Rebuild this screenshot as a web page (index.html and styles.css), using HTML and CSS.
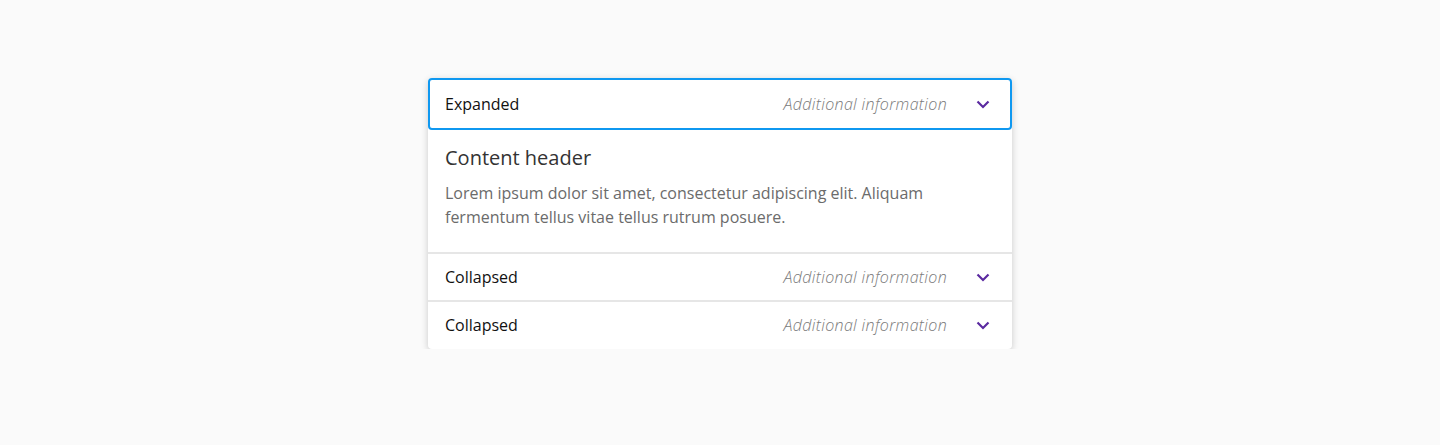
FILE: index.html
```html
<!DOCTYPE html>
<html>
<head>
<meta charset="utf-8">
<link rel="stylesheet" href="styles.css">
</head>
<body>
<div class="accordion">
  <div class="item item-open">
    <div class="head head-active">
      <span class="title">Expanded</span>
      <span class="info">Additional information</span>
      <svg class="chev" width="14" height="9" viewBox="0 0 14 9"><path d="M1.5 1.5 L7 7 L12.5 1.5" fill="none" stroke="#5b2aa0" stroke-width="2.2"/></svg>
    </div>
    <div class="body">
      <h3 class="body-title">Content header</h3>
      <p class="body-text">Lorem ipsum dolor sit amet, consectetur adipiscing elit. Aliquam fermentum tellus vitae tellus rutrum posuere.</p>
    </div>
  </div>
  <div class="item">
    <div class="head">
      <span class="title">Collapsed</span>
      <span class="info">Additional information</span>
      <svg class="chev" width="14" height="9" viewBox="0 0 14 9"><path d="M1.5 1.5 L7 7 L12.5 1.5" fill="none" stroke="#5b2aa0" stroke-width="2.2"/></svg>
    </div>
  </div>
  <div class="item item-last">
    <div class="head">
      <span class="title">Collapsed</span>
      <span class="info">Additional information</span>
      <svg class="chev" width="14" height="9" viewBox="0 0 14 9"><path d="M1.5 1.5 L7 7 L12.5 1.5" fill="none" stroke="#5b2aa0" stroke-width="2.2"/></svg>
    </div>
  </div>
</div>
</body>
</html>
```
FILE: styles.css
```css
html, body {
  margin: 0;
  padding: 0;
  background: #fafafa;
  font-family: "Open Sans", "Noto Sans", sans-serif;
}
body {
  padding-top: 78px;
}
.accordion {
  width: 584px;
  margin: 0 auto;
  background: #fff;
  border-radius: 4px;
  box-shadow: 0 2px 7px rgba(0, 0, 0, 0.2);
}
.item + .item {
  border-top: 2px solid #e6e6e6;
}
.item-last {
  padding-bottom: 1px;
}
.head {
  height: 46px;
  display: flex;
  align-items: center;
  padding: 0 22px 0 17px;
  box-sizing: border-box;
}
.head-active {
  height: 52px;
  border: 2px solid #0f98f0;
  border-radius: 4px;
  padding: 0 20px 0 15px;
}
.title {
  font-size: 16px;
  color: #111;
  flex: 1;
}
.info {
  font-size: 16px;
  font-style: italic;
  font-weight: 300;
  color: #7a7a7a;
  margin-right: 29px;
  letter-spacing: 0.35px;
}
.chev {
  display: block;
}
.body {
  padding: 14px 17px 23px 17px;
}
.body-title {
  margin: 0;
  font-size: 20px;
  line-height: 28px;
  font-weight: 400;
  color: #333;
}
.body-text {
  margin: 9px 0 0 0;
  font-size: 16px;
  line-height: 24px;
  color: #6b6b6b;
}
```
